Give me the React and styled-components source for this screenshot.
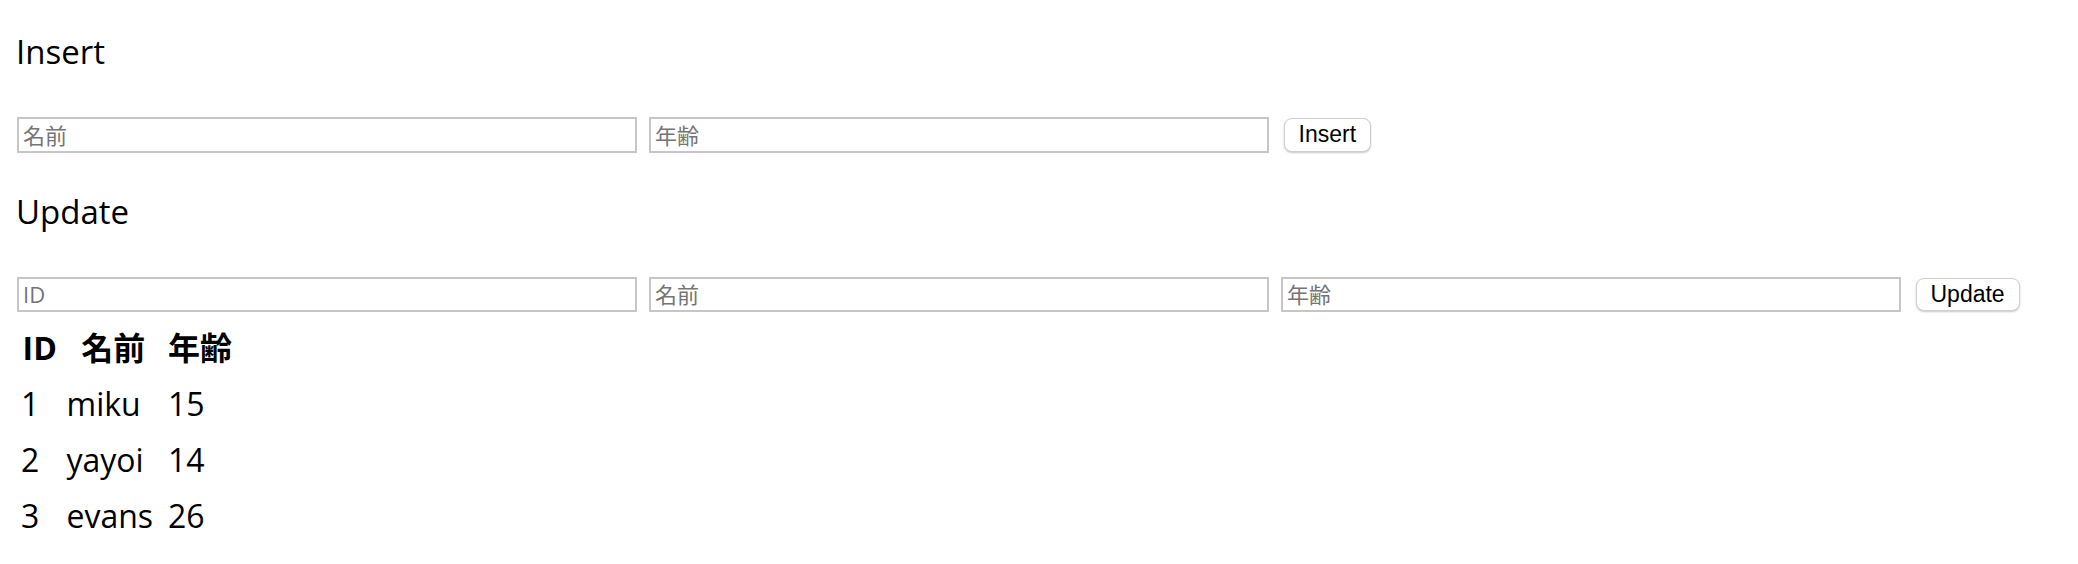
import React from 'react';
import styled, {createGlobalStyle} from 'styled-components';

const GlobalStyle = createGlobalStyle`
    body {
        margin: 0;
        background: #fff;
        color: #000;
        font-family: "Open Sans", "Noto Sans CJK JP", sans-serif;
    }
`;

const people = [
    {id: 1, name: 'miku', age: 15},
    {id: 2, name: 'yayoi', age: 14},
    {id: 3, name: 'evans', age: 26},
];

const App = () => {
    return (
        <Page>
            <GlobalStyle/>
            <Title>Insert</Title>
            <FormRow>
                <TextInput placeholder="名前"/>
                <TextInput placeholder="年齢"/>
                <Button>Insert</Button>
            </FormRow>
            <Title top={35}>Update</Title>
            <FormRow>
                <TextInput placeholder="ID"/>
                <TextInput placeholder="名前"/>
                <TextInput placeholder="年齢"/>
                <Button>Update</Button>
            </FormRow>
            <Table>
                <thead>
                    <tr>
                        <Th width={37.5}>ID</Th>
                        <Th width={93.5}>名前</Th>
                        <Th>年齢</Th>
                    </tr>
                </thead>
                <tbody>
                    {people.map(p => (
                        <tr key={p.id}>
                            <Td>{p.id}</Td>
                            <Td>{p.name}</Td>
                            <Td>{p.age}</Td>
                        </tr>
                    ))}
                </tbody>
            </Table>
        </Page>
    )
}

export default App;

const Page = styled.div`
    display: flex;
    flex-direction: column;
    align-items: flex-start;
    padding: 28px 0 0 17px;
`;

const Title = styled.div`
    margin: ${props => props.top || 0}px 0 0 -1px;
    font-size: 33px;
    line-height: 48px;
    font-weight: 400;
`;

const FormRow = styled.div`
    display: flex;
    align-items: center;
    gap: 12.5px;
    margin-top: 41px;
`;

const TextInput = styled.input`
    box-sizing: border-box;
    width: 619.5px;
    height: 35.5px;
    margin: 0;
    padding: 0 4px;
    border: 2px solid #c6c6c6;
    border-radius: 0;
    outline: none;
    background: #fff;
    font-family: "Open Sans", "Noto Sans CJK JP", sans-serif;
    font-size: 22px;
    color: #000;
    &::placeholder {
        color: #757575;
    }
`;

const Button = styled.button`
    box-sizing: border-box;
    height: 33.5px;
    margin-left: 2.5px;
    padding: 0 14px;
    border: 1px solid #cfcfcf;
    border-radius: 8px;
    background: #fff;
    box-shadow: 0 1px 2px rgba(0, 0, 0, 0.22);
    font-family: "Liberation Sans", Arial, sans-serif;
    font-size: 23px;
    color: #000;
    cursor: pointer;
`;

const Table = styled.table`
    margin: 6px 0 0 -2px;
    border-collapse: separate;
    border-spacing: 4px;
    font-size: 32px;
    line-height: 48px;
`;

const Th = styled.th`
    padding: 2px;
    width: ${props => props.width ? `${props.width}px` : 'auto'};
    font-weight: 700;
    text-align: center;
`;

const Td = styled.td`
    padding: 2px;
    text-align: left;
`;
